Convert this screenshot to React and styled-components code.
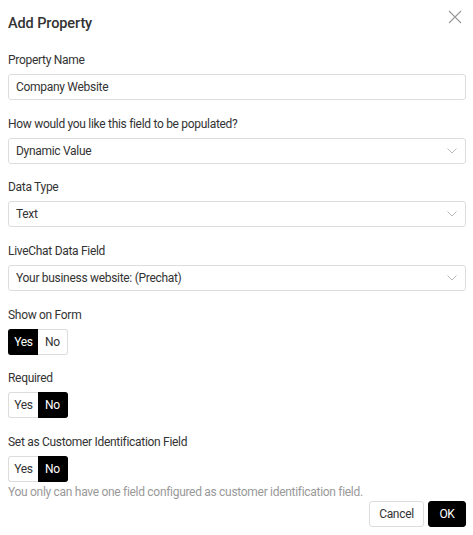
import React, { useState } from 'react';
import styled, { createGlobalStyle } from 'styled-components';

const GlobalStyle = createGlobalStyle`
  body {
    margin: 0;
    background: #fff;
    font-family: Roboto, "Noto Sans", sans-serif;
    color: #333;
  }
`;

const Dialog = styled.div`
  width: 473px;
  box-sizing: border-box;
  padding: 12px 7px 8px 8px;
  letter-spacing: -0.3px;
`;

const Header = styled.div`
  display: flex;
  justify-content: space-between;
  align-items: flex-start;
  margin-bottom: 16px;
`;

const Title = styled.h2`
  margin: 0;
  font-size: 14.5px;
  line-height: 24px;
  font-weight: 500;
  letter-spacing: -0.1px;
  color: #333;
`;

const Close = styled.button`
  border: 0;
  background: none;
  padding: 0;
  margin: -2px 4px 0 0;
  width: 14px;
  height: 14px;
  cursor: pointer;
  display: flex;
`;

const Field = styled.div`
  display: flex;
  flex-direction: column;
  gap: 6px;
  margin-bottom: ${(p) => (p.$tight ? '0' : '15.67px')};
`;

const Label = styled.label`
  font-size: 12px;
  line-height: 16px;
  color: #333;
`;

const Input = styled.input`
  box-sizing: border-box;
  height: 26px;
  width: 100%;
  border: 1px solid #ddd;
  border-radius: 3px;
  padding: 0 7px;
  font: inherit;
  font-size: 12px;
  letter-spacing: -0.3px;
  color: #333;
  outline: none;
`;

const SelectBox = styled.div`
  box-sizing: border-box;
  height: 26px;
  border: 1px solid #ddd;
  border-radius: 3px;
  padding: 0 8px 0 7px;
  display: flex;
  align-items: center;
  justify-content: space-between;
  font-size: 12px;
  color: #333;
`;

const Toggle = styled.div`
  display: flex;
  height: 26px;
`;

const ToggleBtn = styled.button`
  box-sizing: border-box;
  width: 30px;
  height: 26px;
  padding: 0;
  font: inherit;
  font-size: 12px;
  letter-spacing: -0.3px;
  cursor: pointer;
  border: 1px solid ${(p) => (p.$active ? '#000' : '#ddd')};
  background: ${(p) => (p.$active ? '#000' : '#fff')};
  color: ${(p) => (p.$active ? '#fff' : '#333')};
  border-radius: ${(p) => (p.$first ? '3px 0 0 3px' : '0 3px 3px 0')};
  ${(p) => (p.$first ? 'border-right: 0;' : 'border-left: 0;')}
`;

const Hint = styled.div`
  margin-top: 2px;
  font-size: 12px;
  line-height: 16px;
  color: #999;
`;

const Footer = styled.div`
  display: flex;
  justify-content: flex-end;
  gap: 4px;
  margin-top: 1px;
`;

const Button = styled.button`
  box-sizing: border-box;
  height: 26px;
  padding: 0;
  border-radius: 3px;
  font: inherit;
  font-size: 12px;
  letter-spacing: -0.3px;
  cursor: pointer;
  border: 1px solid ${(p) => (p.$primary ? '#000' : '#ddd')};
  background: ${(p) => (p.$primary ? '#000' : '#fff')};
  color: ${(p) => (p.$primary ? '#fff' : '#333')};
  width: ${(p) => (p.$primary ? '38px' : '55px')};
`;

const Chevron = () => (
  <svg width="10" height="6" viewBox="0 0 10 6">
    <path d="M0.5 0.5 L5 5 L9.5 0.5" fill="none" stroke="#bbb" strokeWidth="1" />
  </svg>
);

const Select = ({ value }) => (
  <SelectBox>
    <span>{value}</span>
    <Chevron />
  </SelectBox>
);

const YesNo = ({ value, onChange }) => (
  <Toggle>
    <ToggleBtn $first $active={value} onClick={() => onChange(true)}>Yes</ToggleBtn>
    <ToggleBtn $active={!value} onClick={() => onChange(false)}>No</ToggleBtn>
  </Toggle>
);

export default function App() {
  const [showOnForm, setShowOnForm] = useState(true);
  const [required, setRequired] = useState(false);
  const [customerId, setCustomerId] = useState(false);

  return (
    <>
      <GlobalStyle />
      <Dialog>
        <Header>
          <Title>Add Property</Title>
          <Close aria-label="Close">
            <svg width="14" height="14" viewBox="0 0 14 14">
              <path d="M1 1 L13 13 M13 1 L1 13" stroke="#999" strokeWidth="1.1" />
            </svg>
          </Close>
        </Header>

        <Field>
          <Label>Property Name</Label>
          <Input defaultValue="Company Website" />
        </Field>
        <Field>
          <Label>How would you like this field to be populated?</Label>
          <Select value="Dynamic Value" />
        </Field>
        <Field>
          <Label>Data Type</Label>
          <Select value="Text" />
        </Field>
        <Field>
          <Label>LiveChat Data Field</Label>
          <Select value="Your business website: (Prechat)" />
        </Field>
        <Field>
          <Label>Show on Form</Label>
          <YesNo value={showOnForm} onChange={setShowOnForm} />
        </Field>
        <Field>
          <Label>Required</Label>
          <YesNo value={required} onChange={setRequired} />
        </Field>
        <Field $tight>
          <Label>Set as Customer Identification Field</Label>
          <YesNo value={customerId} onChange={setCustomerId} />
        </Field>
        <Hint>You only can have one field configured as customer identification field.</Hint>

        <Footer>
          <Button>Cancel</Button>
          <Button $primary>OK</Button>
        </Footer>
      </Dialog>
    </>
  );
}
